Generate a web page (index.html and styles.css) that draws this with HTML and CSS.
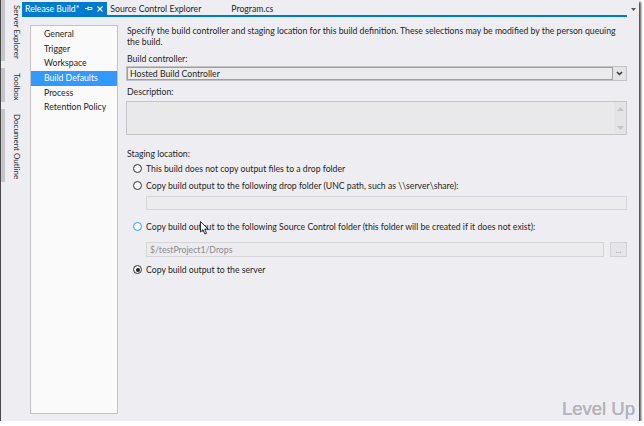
FILE: index.html
```html
<!DOCTYPE html>
<html lang="en">

<head>
    <meta charset="UTF-8">
    <title>Release Build - Build Defaults</title>
    <link rel="stylesheet" href="styles.css">
</head>

<body>
    <div class="shot">
        <!-- Left dock: collapsed tool windows -->
        <div class="dock">
            <div class="dock-tab">Server Explorer</div>
            <div class="dock-tab">Toolbox</div>
            <div class="dock-tab">Document Outline</div>
        </div>

        <div class="editor">
            <div class="tabbar">
                <div class="tabs">
                    <div class="tab active">
                        <span>Release Build*</span>
                        <svg class="pin" width="8" height="7" viewBox="0 0 8 7">
                            <path d="M0 3.5H3M3 1.5V5.5M3 2.5H7V4.5H3" stroke="#fff" stroke-width="0.9" fill="none" />
                        </svg>
                        <svg class="close" width="6" height="6" viewBox="0 0 6 6">
                            <path d="M0.5 0.5L5.5 5.5M5.5 0.5L0.5 5.5" stroke="#fff" stroke-width="1.1" />
                        </svg>
                    </div>
                    <div class="tab">Source Control Explorer</div>
                    <div class="tab">Program.cs</div>
                </div>
                <div class="tab-menu">
                    <svg width="5" height="3" viewBox="0 0 5 3">
                        <path d="M0 0H5L2.5 3Z" fill="#555" />
                    </svg>
                </div>
            </div>

            <div class="page">
                <ul class="nav">
                    <li>General</li>
                    <li>Trigger</li>
                    <li>Workspace</li>
                    <li class="selected">Build Defaults</li>
                    <li>Process</li>
                    <li>Retention Policy</li>
                </ul>

                <div class="form">
                    <p class="intro">Specify the build controller and staging location for this build definition. These selections may be modified by the person queuing the build.</p>

                    <div class="label label-controller">Build controller:</div>
                    <div class="select">
                        <div class="select-value">Hosted Build Controller</div>
                        <div class="select-arrow">
                            <svg width="7" height="5" viewBox="0 0 7 5">
                                <path d="M1 1L3.5 3.5L6 1" stroke="#333" stroke-width="1.5" fill="none" />
                            </svg>
                        </div>
                    </div>

                    <div class="label">Description:</div>
                    <div class="textarea">
                        <div class="scroll">
                            <svg width="7" height="4" viewBox="0 0 7 4">
                                <path d="M0 4H7L3.5 0Z" fill="#c4c4c8" />
                            </svg>
                            <svg width="7" height="4" viewBox="0 0 7 4">
                                <path d="M0 0H7L3.5 4Z" fill="#c4c4c8" />
                            </svg>
                        </div>
                    </div>

                    <div class="label label-staging">Staging location:</div>
                    <div class="radio radio-first"><span class="dot"></span>This build does not copy output files to a drop folder</div>
                    <div class="radio radio-drop"><span class="dot"></span>Copy build output to the following drop folder (UNC path, such as \\server\share):</div>
                    <div class="field field-drop"></div>
                    <div class="radio radio-source"><span class="dot hover"></span>Copy build output to the following Source Control folder (this folder will be created if it does not exist):</div>
                    <div class="field-row">
                        <div class="field">$/testProject1/Drops</div>
                        <div class="browse">...</div>
                    </div>
                    <div class="radio radio-server"><span class="dot checked"></span>Copy build output to the server</div>
                </div>
            </div>
        </div>

        <svg class="cursor" width="9" height="14" viewBox="0 0 9 14">
            <path d="M0.5 0.5V11L3 8.6L4.9 13L6.5 12.3L4.7 8.1H8Z" fill="#fff" stroke="#000" stroke-width="0.8" />
        </svg>

        <div class="watermark">Level Up</div>
    </div>
</body>

</html>
```

FILE: styles.css
```css
body {
    margin: 0;
    background-color: #ffffff;
    font-family: "Segoe UI", Lato, sans-serif;
    font-size: 8.7px;
    color: #1e1e1e;
}

.shot {
    position: relative;
    display: flex;
    width: 638px;
    height: 421px;
    background-color: #eeeef2;
    border-left: 1px solid #4a4a4a;
    box-shadow: 2px 2px 2px rgba(0, 0, 0, 0.7);
}

/* Left dock */
.dock {
    width: 21px;
    display: flex;
    flex-direction: column;
    gap: 7px;
}

.dock-tab {
    writing-mode: vertical-rl;
    border-left: 4px solid #c6c6ca;
    padding: 5px 0 2px 3px;
    font-size: 8px;
    line-height: 10px;
    color: #2a2a2a;
}

/* Editor with document tabs */
.editor {
    flex: 1;
    display: flex;
    flex-direction: column;
}

.tabbar {
    display: flex;
    height: 17px;
    padding-top: 2px;
    box-sizing: border-box;
}

.tabs {
    display: flex;
    width: 605px;
    border-bottom: 2px solid #007acc;
}

.tab {
    display: flex;
    align-items: center;
    height: 13px;
    line-height: 13px;
    padding: 0 27px 0 3px;
}

.tab.active {
    background-color: #007acc;
    color: #fff;
    padding-right: 4px;
}

.tab .pin {
    margin-left: 6px;
}

.tab .close {
    margin-left: 4px;
}

.tab-menu {
    flex: 1;
    display: flex;
    justify-content: center;
    padding-top: 6px;
}

/* Page */
.page {
    flex: 1;
    display: flex;
    gap: 8px;
    padding: 8px 12px 7px 8px;
}

.nav {
    width: 86px;
    margin: 0;
    padding: 1px 0 0;
    list-style: none;
    background-color: #fafafa;
    border: 1px solid #c3c3c6;
}

.nav li {
    height: 14.7px;
    line-height: 14.7px;
    padding-left: 13px;
}

.nav li.selected {
    background-color: #3399ff;
    color: #fff;
}

.form {
    flex: 1;
    display: flex;
    flex-direction: column;
}

.intro {
    margin: 0;
    line-height: 11px;
    padding-left: 1px;
}

.label {
    line-height: 11px;
    margin-top: 5px;
    padding-left: 1px;
}

.label-controller {
    margin-top: 6px;
}

.label-staging {
    margin-top: 13px;
}

.select {
    display: flex;
    height: 15px;
    margin-top: 2px;
    box-sizing: border-box;
    background-color: #e4e4e6;
    border: 1px solid #c3c3c6;
}

.select-value {
    flex: 1;
    line-height: 11px;
    padding-left: 2px;
    background-color: #ebebed;
    border: 1px solid #9e9ea2;
}

.select-arrow {
    width: 13px;
    display: flex;
    align-items: center;
    justify-content: center;
}

.textarea {
    display: flex;
    justify-content: flex-end;
    height: 34px;
    margin-top: 4px;
    box-sizing: border-box;
    background-color: #e9e9ec;
    border: 1px solid #c6c6c9;
}

.scroll {
    width: 12px;
    display: flex;
    flex-direction: column;
    justify-content: space-between;
    align-items: center;
    padding: 5px 0 4px;
    background-color: #e4e4e7;
}

.radio {
    display: flex;
    align-items: center;
    gap: 4px;
    line-height: 11px;
    padding-left: 7px;
    margin-top: 6px;
}

.radio-first {
    margin-top: 4px;
}

.radio-source {
    margin-top: 11px;
}

.radio-server {
    margin-top: 7px;
}

.dot {
    position: relative;
    width: 9px;
    height: 9px;
    box-sizing: border-box;
    border: 1px solid #333;
    border-radius: 50%;
    background-color: #f6f6f6;
}

.dot.hover {
    border-color: #3399ff;
}

.dot.checked::after {
    content: "";
    position: absolute;
    top: 1.5px;
    left: 1.5px;
    width: 4px;
    height: 4px;
    border-radius: 50%;
    background-color: #222;
}

.field {
    flex: 1;
    height: 14px;
    box-sizing: border-box;
    line-height: 12px;
    padding-left: 3px;
    color: #8a8a8e;
    background-color: #ececef;
    border: 1px solid #d6d6da;
}

.field-drop {
    flex: none;
    margin: 5px 0 0 20px;
}

.field-row {
    display: flex;
    gap: 6px;
    margin: 10px 0 0 20px;
}

.field-row .field {
    height: 15px;
    line-height: 13px;
}

.browse {
    width: 17px;
    height: 15px;
    box-sizing: border-box;
    text-align: center;
    line-height: 14px;
    color: #a8a8ac;
    background-color: #e6e6e9;
    border: 1px solid #d2d2d6;
}

/* Overlays */
.cursor {
    position: absolute;
    left: 199px;
    top: 221px;
}

.watermark {
    position: absolute;
    right: 4px;
    bottom: 3px;
    font-family: "Liberation Sans", Arial, sans-serif;
    font-size: 18.5px;
    line-height: 18px;
    color: #b4b6c2;
    text-shadow: 0 0 0.5px #9a9088;
}
```
